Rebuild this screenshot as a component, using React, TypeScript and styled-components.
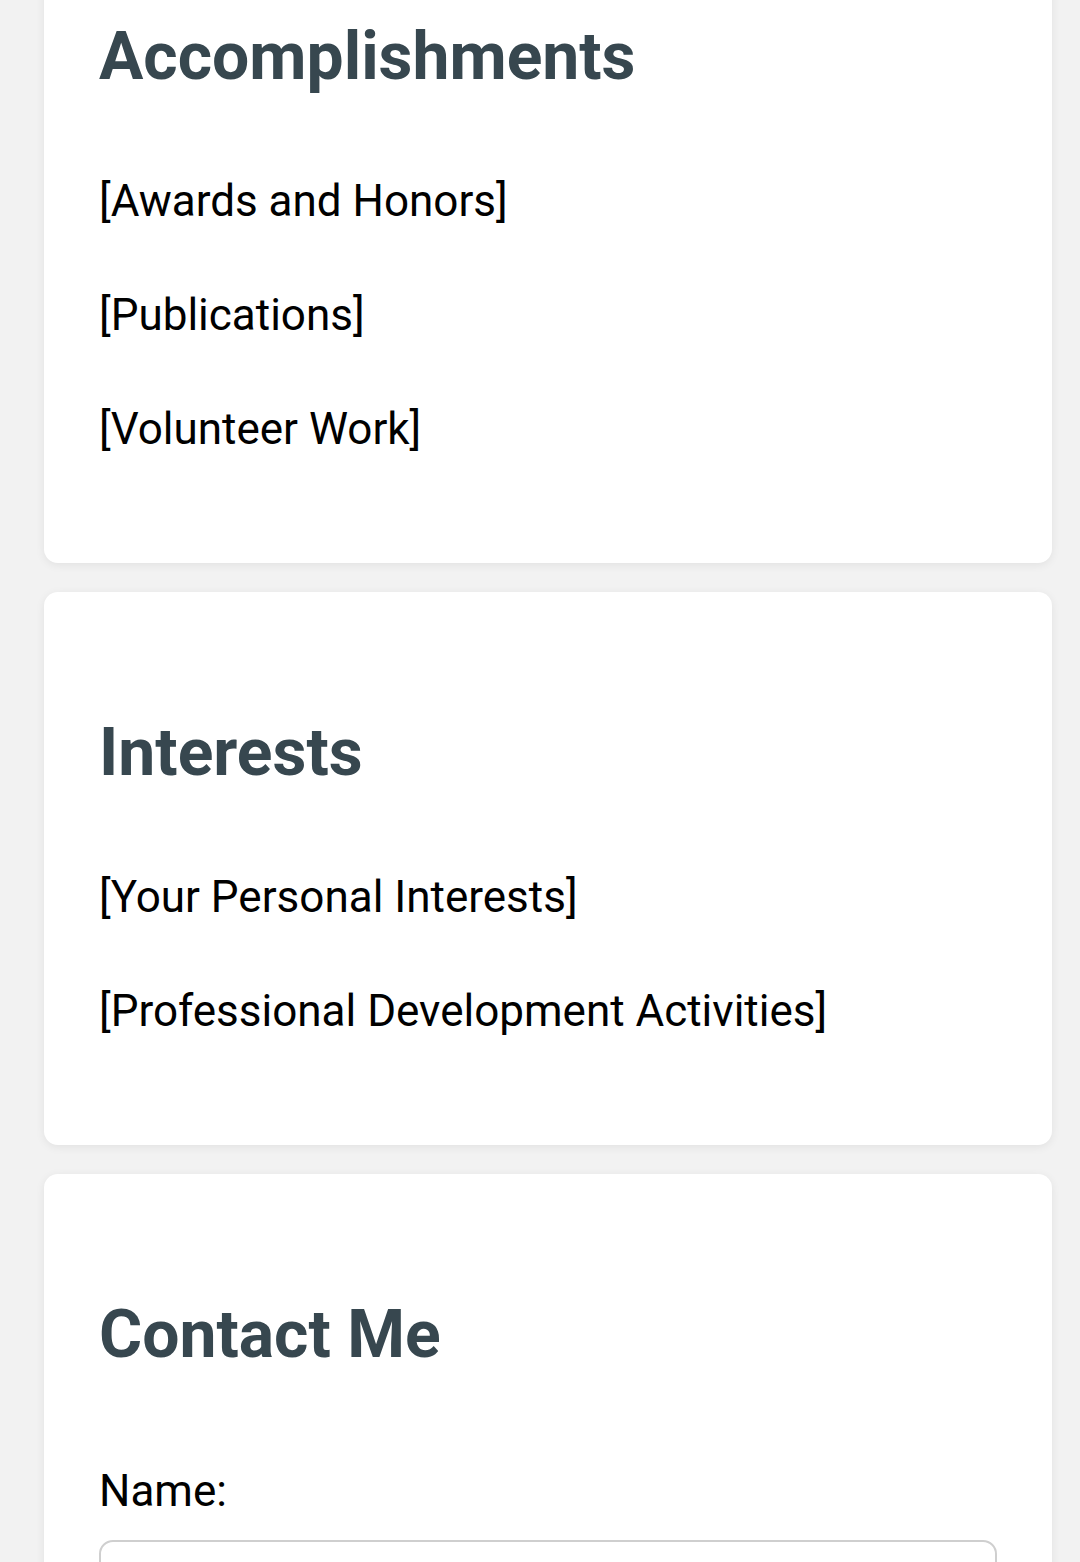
import React from "react";
import styled, { createGlobalStyle } from "styled-components";

const Global = createGlobalStyle`
  html, body { margin: 0; padding: 0; background: #f2f2f2; }
  body { font-family: Roboto, "Noto Sans", Arial, sans-serif; overflow: hidden; }
`;

const Page = styled.main`
  display: flex;
  flex-direction: column;
  gap: 29px;
  padding: 0 28px 0 44px;
  margin-top: -104px;
`;

const Card = styled.section`
  background: #ffffff;
  border-radius: 14px;
  box-shadow: 0 2px 10px rgba(0, 0, 0, 0.07);
  padding: 58px 55px 48px;
`;

const Heading = styled.h2`
  margin: 64px 0 77px;
  font-size: 66px;
  line-height: 78px;
  font-weight: 700;
  color: #37474f;
`;

const Item = styled.p`
  margin: 0 0 57px;
  font-size: 44px;
  line-height: 57px;
  color: #000;
`;

const Form = styled.form`
  display: flex;
  flex-direction: column;
  margin-top: 89px;
`;

const Label = styled.label`
  font-size: 44px;
  line-height: 57px;
  color: #000;
  margin-bottom: 20px;
`;

const Input = styled.input`
  height: 120px;
  border: 2px solid #cfcfcf;
  border-radius: 14px;
  background: #fff;
  font-size: 44px;
  padding: 0 24px;
`;

const sections = [
  { title: "Accomplishments", items: ["[Awards and Honors]", "[Publications]", "[Volunteer Work]"] },
  { title: "Interests", items: ["[Your Personal Interests]", "[Professional Development Activities]"] },
];

export default function App() {
  return (
    <>
      <Global />
      <Page>
        {sections.map((s) => (
          <Card key={s.title}>
            <Heading>{s.title}</Heading>
            {s.items.map((i) => (
              <Item key={i}>{i}</Item>
            ))}
          </Card>
        ))}
        <Card>
          <Heading>Contact Me</Heading>
          <Form>
            <Label htmlFor="name">Name:</Label>
            <Input id="name" type="text" />
          </Form>
        </Card>
      </Page>
    </>
  );
}
